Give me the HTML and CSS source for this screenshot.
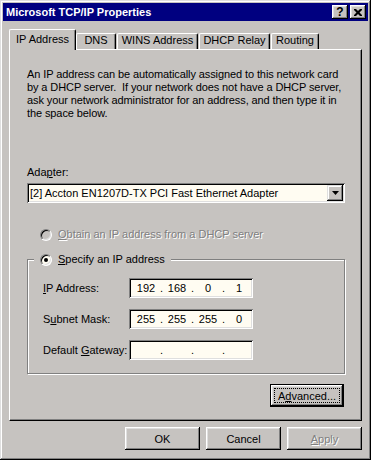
FILE: index.html
```html
<!DOCTYPE html>
<html lang="en">
<head>
  <meta charset="UTF-8" />
  <title>Microsoft TCP/IP Properties</title>
  <link rel="stylesheet" href="styles.css">
</head>
<body>
  <div class="window">
    <div class="titlebar">
      <span class="title">Microsoft TCP/IP Properties</span>
      <div class="caption-buttons">
        <span class="cap-btn cap-help">?</span>
        <span class="cap-btn">
          <svg width="8" height="7" viewBox="0 0 8 7"><path d="M0 0h2l2 2 2-2h2v1l-2.5 2.5L8 6v1H6L4 5 2 7H0V6l2.5-2.5L0 1z" fill="#000"/></svg>
        </span>
      </div>
    </div>

    <div class="tabs">
      <div class="tab active">IP Address</div>
      <div class="tab tab-dns">DNS</div>
      <div class="tab tab-wins">WINS Address</div>
      <div class="tab tab-dhcp">DHCP Relay</div>
      <div class="tab tab-routing">Routing</div>
    </div>

    <div class="panel">
      <p class="intro">An IP address can be automatically assigned to this network card<br>by a DHCP server.&nbsp; If your network does not have a DHCP server,<br>ask your network administrator for an address, and then type it in<br>the space below.</p>

      <div class="adapter-label">Ada<u>p</u>ter:</div>
      <div class="combo">
        <span class="combo-text">[2] Accton EN1207D-TX PCI Fast Ethernet Adapter</span>
        <span class="combo-btn">
          <svg width="7" height="4" viewBox="0 0 7 4"><path d="M0 0h7L3.5 4z" fill="#000"/></svg>
        </span>
      </div>

      <div class="radio-row obtain disabled">
        <span class="radio"></span>
        <span><u>O</u>btain an IP address from a DHCP server</span>
      </div>

      <fieldset class="group">
        <legend class="radio-row">
          <span class="radio"><span class="dot"></span></span>
          <span><u>S</u>pecify an IP address</span>
        </legend>
        <div class="group-body">
          <div class="field-row">
            <span class="field-label"><u>I</u>P Address:</span>
            <div class="ip-field">
              <span class="seg">192</span><span class="sep">.</span><span class="seg">168</span><span class="sep">.</span><span class="seg">0</span><span class="sep">.</span><span class="seg">1</span>
            </div>
          </div>
          <div class="field-row">
            <span class="field-label">S<u>u</u>bnet Mask:</span>
            <div class="ip-field">
              <span class="seg">255</span><span class="sep">.</span><span class="seg">255</span><span class="sep">.</span><span class="seg">255</span><span class="sep">.</span><span class="seg">0</span>
            </div>
          </div>
          <div class="field-row">
            <span class="field-label">Default <u>G</u>ateway:</span>
            <div class="ip-field">
              <span class="seg"></span><span class="sep">.</span><span class="seg"></span><span class="sep">.</span><span class="seg"></span><span class="sep">.</span><span class="seg"></span>
            </div>
          </div>
        </div>
      </fieldset>

      <div class="advanced-row">
        <button class="btn btn-default">A<u>d</u>vanced...</button>
      </div>
    </div>

    <div class="dialog-buttons">
      <button class="btn">OK</button>
      <button class="btn">Cancel</button>
      <button class="btn disabled"><u>A</u>pply</button>
    </div>
  </div>
</body>
</html>
```

FILE: styles.css
```css
:root {
  --face: #c6c3c0;
  --light: #dfdfdf;
  --shadow: #808080;
  --field: #fffcf2;
  --title: #000080;
}

* {
  box-sizing: border-box;
}

body {
  margin: 0;
  background: var(--face);
  font-family: 'Liberation Sans', Arial, sans-serif;
  font-size: 11px;
  line-height: 13px;
  color: #000;
}

.window {
  width: 371px;
  height: 460px;
  padding: 3px;
  background: var(--face);
  box-shadow: inset -1px -1px #000, inset 1px 1px var(--light),
              inset -2px -2px var(--shadow), inset 2px 2px #fff;
  display: flex;
  flex-direction: column;
}

/* title bar */
.titlebar {
  height: 18px;
  background: var(--title);
  color: #fff;
  display: flex;
  align-items: center;
  justify-content: space-between;
  padding: 0 2px 0 3px;
}

.title {
  font-weight: bold;
}

.caption-buttons {
  display: flex;
  gap: 2px;
}

.cap-btn {
  width: 16px;
  height: 14px;
  background: var(--face);
  color: #000;
  font-weight: bold;
  font-size: 12px;
  display: flex;
  align-items: center;
  justify-content: center;
  box-shadow: inset -1px -1px #000, inset 1px 1px #fff,
              inset -2px -2px var(--shadow), inset 2px 2px var(--light);
}

/* tabs */
.tabs {
  display: flex;
  align-items: flex-end;
  margin: 8px 6px 0;
  height: 20px;
  position: relative;
  z-index: 1;
}

.tab {
  height: 16px;
  text-align: center;
  white-space: nowrap;
  border-top: 1px solid #fff;
  border-left: 1px solid #fff;
  border-right: 1px solid #000;
  border-radius: 2px 2px 0 0;
  box-shadow: inset -1px 0 var(--shadow);
  background: var(--face);
  margin-left: 1px;
}

.tab.active {
  width: 67px;
  height: 21px;
  margin: 0 0 -1px 0;
  padding-top: 3px;
}

.tab-dns { width: 40px; margin-left: 0; }
.tab-wins { width: 81px; }
.tab-dhcp { width: 71px; }
.tab-routing { width: 48px; }

/* page */
.panel {
  margin: 0 6px;
  border: 1px solid;
  border-color: #fff #000 #000 #fff;
  box-shadow: inset -1px -1px var(--shadow);
  padding: 18px 16px 13px 17px;
}

.intro {
  margin: 0;
  white-space: nowrap;
  letter-spacing: -0.1px;
}

.adapter-label {
  margin-top: 46px;
}

.combo {
  margin-top: 4px;
  height: 20px;
  background: var(--field);
  box-shadow: inset 1px 1px var(--shadow), inset -1px -1px #fff,
              inset 2px 2px #000, inset -2px -2px var(--light);
  display: flex;
  align-items: center;
  justify-content: space-between;
  padding: 2px 2px 2px 3px;
}

.combo-text {
  white-space: nowrap;
}

.combo-btn {
  width: 16px;
  height: 16px;
  background: var(--face);
  display: flex;
  align-items: center;
  justify-content: center;
  box-shadow: inset -1px -1px #000, inset 1px 1px var(--light),
              inset -2px -2px var(--shadow), inset 2px 2px #fff;
}

.radio-row {
  display: flex;
  align-items: center;
  gap: 6px;
  height: 13px;
  white-space: nowrap;
}

.obtain {
  margin: 25px 0 0 13px;
}

.disabled {
  color: var(--shadow);
  text-shadow: 1px 1px #fff;
}

.radio {
  width: 12px;
  height: 12px;
  border-radius: 50%;
  border: 1px solid;
  border-color: var(--shadow) #fff #fff var(--shadow);
  box-shadow: inset 1px 1px #000, inset -1px -1px var(--light);
  background: var(--field);
  display: flex;
  align-items: center;
  justify-content: center;
}

.disabled .radio {
  background: var(--face);
}

.dot {
  width: 4px;
  height: 4px;
  border-radius: 50%;
  background: #000;
}

/* group box */
.group {
  margin: 12px 0 0;
  padding: 0;
  border: 1px solid var(--shadow);
  box-shadow: inset 1px 1px #fff, 1px 1px #fff;
  min-width: 0;
}

.group legend {
  margin-left: 6px;
  padding: 0 6px;
  background: var(--face);
}

.group-body {
  padding: 12px 0 13px 15px;
  display: flex;
  flex-direction: column;
  gap: 11px;
}

.field-row {
  display: flex;
  align-items: center;
}

.field-label {
  width: 86px;
  white-space: nowrap;
}

.ip-field {
  width: 124px;
  height: 20px;
  background: var(--field);
  box-shadow: inset 1px 1px var(--shadow), inset -1px -1px #fff,
              inset 2px 2px #000, inset -2px -2px var(--light);
  display: flex;
  align-items: center;
  padding-left: 5px;
}

.seg {
  width: 24px;
  text-align: center;
}

.sep {
  width: 7px;
  text-align: center;
}

/* buttons */
.btn {
  width: 75px;
  height: 23px;
  padding: 0;
  border: none;
  background: var(--face);
  font-family: inherit;
  font-size: 11px;
  color: #000;
  box-shadow: inset -1px -1px #000, inset 1px 1px #fff,
              inset -2px -2px var(--shadow), inset 2px 2px var(--light);
}

.btn.disabled {
  color: var(--shadow);
}

.advanced-row {
  display: flex;
  justify-content: flex-end;
  margin: 10px 1px 0 0;
}

.btn-default {
  width: 74px;
  border: 1px solid #000;
  outline: 1px dotted #000;
  outline-offset: -5px;
}

.dialog-buttons {
  display: flex;
  justify-content: flex-end;
  gap: 6px;
  margin: 6px 6px 0;
}
```
